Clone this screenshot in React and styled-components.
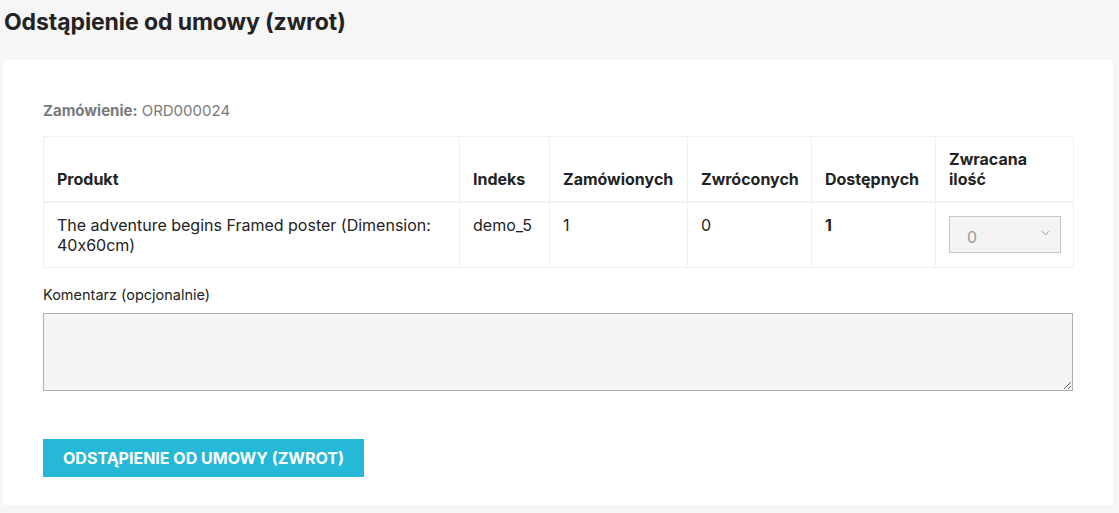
import React from 'react'
import styled, { createGlobalStyle } from 'styled-components';

const GlobalStyle = createGlobalStyle`
  body {
    margin: 0;
    background: #f6f6f6;
    font-family: Inter, "Noto Sans", sans-serif;
    font-feature-settings: "calt" 0;
    color: #232323;
  }
`;

const rows = [
  {
    name: 'The adventure begins Framed poster (Dimension: 40x60cm)',
    ref: 'demo_5',
    ordered: 1,
    returned: 0,
    available: 1,
  },
];

function App() {
  return (
    <>
      <GlobalStyle />
      <Page>
        <Title>Odstąpienie od umowy (zwrot)</Title>
        <Card>
          <OrderRef>
            <strong>Zamówienie:</strong> ORD000024
          </OrderRef>
          <Table>
            <colgroup>
              <col style={{ width: 416 }} />
              <col style={{ width: 90 }} />
              <col style={{ width: 138 }} />
              <col style={{ width: 124 }} />
              <col style={{ width: 124 }} />
              <col style={{ width: 138 }} />
            </colgroup>
            <thead>
              <tr>
                <Th>Produkt</Th>
                <Th>Indeks</Th>
                <Th>Zamówionych</Th>
                <Th>Zwróconych</Th>
                <Th>Dostępnych</Th>
                <Th>Zwracana ilość</Th>
              </tr>
            </thead>
            <tbody>
              {rows.map((r) => (
                <tr key={r.ref}>
                  <Td>{r.name}</Td>
                  <Td>{r.ref}</Td>
                  <Td>{r.ordered}</Td>
                  <Td>{r.returned}</Td>
                  <Td bold>{r.available}</Td>
                  <Td>
                    <QtySelect>
                      <span>0</span>
                      <Chevron viewBox="0 0 10 6">
                        <path d="M1 1l4 4 4-4" fill="none" stroke="#888" strokeWidth="1" />
                      </Chevron>
                    </QtySelect>
                  </Td>
                </tr>
              ))}
            </tbody>
          </Table>
          <Label>Komentarz (opcjonalnie)</Label>
          <TextArea />
          <SubmitButton>Odstąpienie od umowy (zwrot)</SubmitButton>
        </Card>
      </Page>
    </>
  )
}

export default App

const Page = styled.div`
  width: 1119px;
  height: 513px;
  padding: 0 6px 8px 3px;
  box-sizing: border-box;
  display: flex;
  flex-direction: column;
`;

const Title = styled.h1`
  margin: 0;
  padding: 8px 0 0 1px;
  height: 60px;
  box-sizing: border-box;
  font-size: 23px;
  font-weight: 700;
  color: #232323;
  letter-spacing: -0.1px;
`;

const Card = styled.div`
  flex: 1;
  background: #fff;
  padding: 40px 40px 0 40px;
  display: flex;
  flex-direction: column;
  align-items: flex-start;
`;

const OrderRef = styled.div`
  font-size: 15px;
  color: #7a7a7a;
  height: 36px;
  padding-top: 1px;
  box-sizing: border-box;

  strong {
    font-weight: 700;
  }
`;

const Table = styled.table`
  width: 1030px;
  border-collapse: collapse;
  table-layout: fixed;
  font-size: 16px;
`;

const Th = styled.th`
  border: 1px solid #f1f1f1;
  border-bottom-width: 2px;
  height: 65px;
  padding: 12px 12px 12px 13px;
  text-align: left;
  vertical-align: bottom;
  font-weight: 700;
  line-height: 20px;
  box-sizing: border-box;
`;

const Td = styled.td`
  border: 1px solid #f1f1f1;
  height: 64px;
  padding: 12px 12px 12px 13px;
  vertical-align: top;
  line-height: 20px;
  font-weight: ${(p) => (p.bold ? 700 : 400)};
  box-sizing: border-box;
`;

const QtySelect = styled.div`
  width: 112px;
  height: 37px;
  box-sizing: border-box;
  border: 1px solid #c8c8c8;
  background: #f4f4f4;
  color: #999;
  display: flex;
  align-items: center;
  justify-content: space-between;
  padding: 4px 10px 0 17px;
  margin-top: 1px;
`;

const Chevron = styled.svg`
  width: 9px;
  height: 6px;
  margin-bottom: 8px;
`;

const Label = styled.label`
  font-size: 14.5px;
  margin-top: 18px;
  height: 27px;
`;

const TextArea = styled.textarea`
  width: 1030px;
  height: 78px;
  box-sizing: border-box;
  background: #f5f5f5;
  border: 1px solid #b0b0b0;
  border-radius: 0;
  margin: 0;
  font-family: inherit;
`;

const SubmitButton = styled.button`
  margin-top: 48px;
  height: 38px;
  width: 321px;
  background: #25b9d7;
  color: #fff;
  border: none;
  font-family: inherit;
  font-size: 16px;
  font-weight: 700;
  text-transform: uppercase;
  cursor: pointer;
`;
